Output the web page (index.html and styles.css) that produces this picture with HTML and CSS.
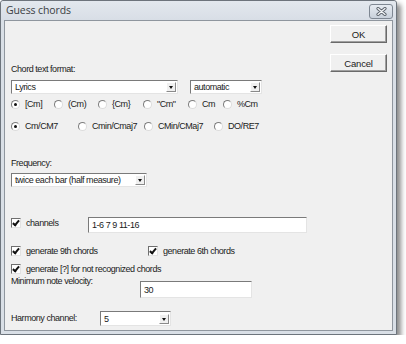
FILE: index.html
```html
<!DOCTYPE html>
<html lang="en">
<head>
    <meta charset="UTF-8">
    <title>Guess chords</title>
    <link rel="stylesheet" href="styles.css">
</head>
<body>

    <div class="window">

        <!-- Title bar -->
        <div class="titlebar">
            <span class="title">Guess chords</span>
            <span class="close-btn">
                <svg width="13" height="9" viewBox="0 0 13 9">
                    <path d="M3 1.5 L10 7.5 M10 1.5 L3 7.5" stroke="#5b626b" stroke-width="3.2" stroke-linecap="round"/>
                    <path d="M3 1.5 L10 7.5 M10 1.5 L3 7.5" stroke="#f4f6f8" stroke-width="1.3" stroke-linecap="round"/>
                </svg>
            </span>
        </div>

        <div class="client">
            <div class="main">

                <div class="label row-format">Chord text format:</div>

                <div class="row row-selects">
                    <div class="combo combo-lyrics"><span class="combo-text">Lyrics</span><span class="combo-arrow"></span></div>
                    <div class="combo combo-auto"><span class="combo-text">automatic</span><span class="combo-arrow"></span></div>
                </div>

                <div class="row row-radio1">
                    <label class="opt w43"><span class="radio on"></span>[Cm]</label>
                    <label class="opt w44"><span class="radio"></span>(Cm)</label>
                    <label class="opt w45"><span class="radio"></span>{Cm}</label>
                    <label class="opt w45"><span class="radio"></span>"Cm"</label>
                    <label class="opt w35"><span class="radio"></span>Cm</label>
                    <label class="opt"><span class="radio"></span>%Cm</label>
                </div>

                <div class="row row-radio2">
                    <label class="opt w67"><span class="radio on"></span>Cm/CM7</label>
                    <label class="opt w66"><span class="radio"></span>Cmin/Cmaj7</label>
                    <label class="opt w70"><span class="radio"></span>CMin/CMaj7</label>
                    <label class="opt"><span class="radio"></span>DO/RE7</label>
                </div>

                <div class="label row-freq">Frequency:</div>

                <div class="row row-freq-select">
                    <div class="combo combo-freq"><span class="combo-text">twice each bar (half measure)</span><span class="combo-arrow"></span></div>
                </div>

                <div class="row row-channels">
                    <label class="opt w77 opt-channels"><span class="check on"></span>channels</label>
                    <div class="edit edit-channels">1-6 7 9 11-16</div>
                </div>

                <div class="row row-gen">
                    <label class="opt w137"><span class="check on"></span>generate 9th chords</label>
                    <label class="opt"><span class="check on"></span>generate 6th chords</label>
                </div>

                <div class="row row-unknown">
                    <label class="opt"><span class="check on"></span>generate [?] for not recognized chords</label>
                </div>

                <div class="row row-velocity">
                    <div class="label w129">Minimum note velocity:</div>
                    <div class="edit edit-velocity">30</div>
                </div>

                <div class="row row-harmony">
                    <div class="label w89">Harmony channel:</div>
                    <div class="combo combo-harmony"><span class="combo-text">5</span><span class="combo-arrow"></span></div>
                </div>

            </div>

            <!-- Dialog buttons -->
            <div class="buttons">
                <button class="push-btn">OK</button>
                <button class="push-btn">Cancel</button>
            </div>
        </div>
    </div>

</body>
</html>
```

FILE: styles.css
```css
html, body {
    margin: 0;
    padding: 0;
    background-color: #ffffff;
}

body {
    font-family: "Liberation Sans", Arial, sans-serif;
    font-size: 9px;
    letter-spacing: -0.45px;
    color: #1b1b1b;
}

.window {
    width: 395px;
    height: 333px;
    border: 1px solid #6d747c;
    border-radius: 3px 3px 0 0;
    background-color: #d9dfe6;
    box-shadow: 4px 4px 5px rgba(0, 0, 0, 0.45);
    display: flex;
    flex-direction: column;
}

.titlebar {
    height: 19px;
    display: flex;
    align-items: center;
    justify-content: space-between;
    padding: 0 3px 0 5px;
    background: linear-gradient(#e3e8ee, #d8dee6);
    border-radius: 3px 3px 0 0;
}

.title {
    font-family: "Open Sans", "Noto Sans", sans-serif;
    font-size: 10.5px;
    letter-spacing: -0.1px;
    color: #3a3e43;
    margin-top: -1px;
}

.close-btn {
    width: 22px;
    height: 13px;
    border: 1px solid #7e8792;
    border-radius: 3px;
    background: linear-gradient(#e6ebf1, #c9d1db);
    display: flex;
    align-items: center;
    justify-content: center;
    margin-top: 1px;
}

.client {
    flex: 1;
    margin: 0 3px 3px 3px;
    border: 1px solid #8f969e;
    background-color: #f0f0f0;
    display: flex;
}

.main {
    flex: 1;
    padding-left: 6px;
}

.row {
    display: flex;
    align-items: center;
}

.label {
    line-height: 11px;
    white-space: nowrap;
}

/* vertical rhythm of the dialog rows */
.row-format { margin-top: 43px; }
.row-selects { margin-top: 5px; gap: 12px; }
.row-radio1 { margin-top: 4px; height: 12px; }
.row-radio2 { margin-top: 10px; height: 12px; }
.row-freq { margin-top: 26px; }
.row-freq-select { margin-top: 4px; }
.row-channels { margin-top: 30px; align-items: flex-start; }
.row-gen { margin-top: 12px; height: 12px; }
.row-unknown { margin-top: 6px; height: 12px; }
.row-velocity { margin-top: 1px; align-items: flex-start; }
.row-harmony { margin-top: 13px; }

.w35 { width: 35px; }
.w43 { width: 43px; }
.w44 { width: 44px; }
.w45 { width: 45px; }
.w66 { width: 66px; }
.w67 { width: 67px; }
.w70 { width: 70px; }
.w77 { width: 77px; }
.w89 { width: 89px; }
.w129 { width: 129px; }
.w137 { width: 137px; }

.opt {
    display: flex;
    align-items: center;
    white-space: nowrap;
    flex-shrink: 0;
}

.opt-channels {
    margin-top: 1px;
}

/* Radio buttons */
.radio {
    width: 9px;
    height: 9px;
    box-sizing: border-box;
    border-radius: 50%;
    border: 1px solid;
    border-color: #7d7d7d #dcdcdc #dcdcdc #7d7d7d;
    background-color: #ffffff;
    margin-right: 5px;
    position: relative;
}

.radio.on::after {
    content: "";
    position: absolute;
    left: 2px;
    top: 2px;
    width: 3px;
    height: 3px;
    border-radius: 50%;
    background-color: #111111;
}

/* Check boxes */
.check {
    width: 10px;
    height: 10px;
    box-sizing: border-box;
    border: 1px solid;
    border-color: #6f6f6f #e2e2e2 #e2e2e2 #6f6f6f;
    background-color: #ffffff;
    margin-right: 5px;
    position: relative;
}

.check.on::after {
    content: "";
    position: absolute;
    left: 2px;
    top: 0px;
    width: 2px;
    height: 5px;
    border: solid #111111;
    border-width: 0 2px 2px 0;
    transform: rotate(40deg);
}

/* Combo boxes */
.combo {
    height: 14px;
    box-sizing: border-box;
    border: 1px solid;
    border-color: #7a7a7a #e4e4e4 #e4e4e4 #7a7a7a;
    background-color: #ffffff;
    display: flex;
    align-items: center;
    justify-content: space-between;
    padding: 0 1px 0 3px;
}

.combo-lyrics { width: 167px; }
.combo-auto { width: 72px; }
.combo-freq { width: 136px; }
.combo-harmony { width: 71px; height: 15px; }

.combo-text {
    white-space: nowrap;
}

.combo-arrow {
    width: 10px;
    height: 10px;
    box-sizing: border-box;
    background-color: #f0f0f0;
    border: 1px solid;
    border-color: #ffffff #8a8a8a #8a8a8a #ffffff;
    position: relative;
}

.combo-arrow::after {
    content: "";
    position: absolute;
    left: 2px;
    top: 3px;
    border-left: 2.5px solid transparent;
    border-right: 2.5px solid transparent;
    border-top: 3px solid #111111;
}

/* Edit boxes */
.edit {
    box-sizing: border-box;
    border: 1px solid;
    border-color: #7a7a7a #e4e4e4 #e4e4e4 #7a7a7a;
    background-color: #ffffff;
    padding: 0 3px;
    display: flex;
    align-items: center;
}

.edit-channels {
    width: 219px;
    height: 16px;
}

.edit-velocity {
    width: 112px;
    height: 17px;
    margin-top: 5px;
}

/* Push buttons */
.buttons {
    width: 57px;
    margin-right: 5px;
    padding-top: 4px;
    display: flex;
    flex-direction: column;
    gap: 11px;
}

.push-btn {
    height: 18px;
    margin: 0;
    padding: 0;
    font-family: "Liberation Sans", Arial, sans-serif;
    font-size: 9.5px;
    letter-spacing: -0.2px;
    color: #1b1b1b;
    background-color: #f0f0f0;
    border: 1px solid;
    border-color: #ffffff #6a6a6a #6a6a6a #ffffff;
    box-shadow: inset -1px -1px 0 #a0a0a0;
}
```
